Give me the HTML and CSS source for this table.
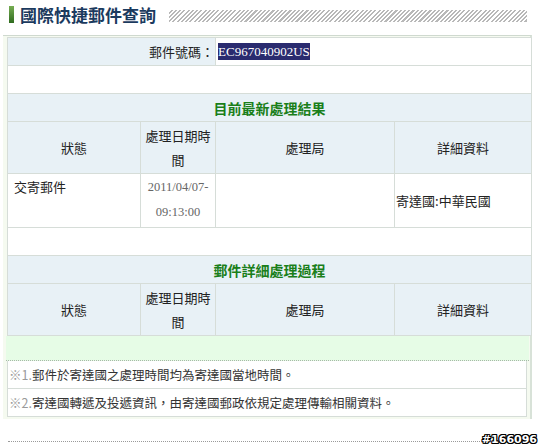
FILE: index.html
```html
<!DOCTYPE html>
<html lang="zh-Hant">
<head>
<meta charset="utf-8">
<title>國際快捷郵件查詢</title>
<link rel="stylesheet" href="styles.css">
</head>
<body>
<div class="page">
  <div class="title">
    <span class="bar"></span>
    <h1>國際快捷郵件查詢</h1>
    <span class="stripes"></span>
  </div>
  <div class="panel">
    <table class="grid">
      <colgroup><col class="c1"><col class="c2"><col class="c3"><col class="c4"></colgroup>
      <tr class="r-short blue">
        <td colspan="2" class="label">郵件號碼：</td>
        <td colspan="2" class="value"><span class="sel">EC967040902US</span></td>
      </tr>
      <tr class="r-short"><td colspan="4"></td></tr>
      <tr class="r-short blue"><td colspan="4" class="section">目前最新處理結果</td></tr>
      <tr class="r-head blue">
        <td class="center">狀態</td>
        <td class="center">處理日期時間</td>
        <td class="center">處理局</td>
        <td class="center">詳細資料</td>
      </tr>
      <tr class="r-data">
        <td class="top">交寄郵件</td>
        <td class="center date">2011/04/07-09:13:00</td>
        <td></td>
        <td class="detail">寄達國:中華民國</td>
      </tr>
      <tr class="r-short"><td colspan="4"></td></tr>
      <tr class="r-short blue"><td colspan="4" class="section">郵件詳細處理過程</td></tr>
      <tr class="r-head blue">
        <td class="center">狀態</td>
        <td class="center">處理日期時間</td>
        <td class="center">處理局</td>
        <td class="center">詳細資料</td>
      </tr>
    </table>
    <div class="green-band"></div>
    <div class="notes">
      <p class="note"><span class="mark">※1.</span>郵件於寄達國之處理時間均為寄達國當地時間。</p>
      <p class="note"><span class="mark">※2.</span>寄達國轉遞及投遞資訊，由寄達國郵政依規定處理傳輸相關資料。</p>
    </div>
  </div>
  <div class="footer">
    <span class="rule"></span>
    <span class="tag">#166096</span>
  </div>
</div>
</body>
</html>
```
FILE: styles.css
```css
html, body {
  margin: 0;
  padding: 0;
  background: #ffffff;
}
body {
  font-family: "Noto Sans CJK TC", "Noto Sans", sans-serif;
  font-size: 13px;
  color: #222;
}
.page {
  width: 541px;
  height: 448px;
  position: relative;
}
.title {
  display: flex;
  align-items: center;
  height: 30px;
  padding: 0 14px 0 9px;
  box-sizing: border-box;
}
.bar {
  width: 5px;
  height: 17px;
  background: linear-gradient(#76ad52, #2f6b1f);
  margin-right: 6px;
  margin-top: -1px;
}
.title h1 {
  margin: 0;
  font-size: 17px;
  line-height: 20px;
  font-weight: bold;
  color: #1b3a5e;
  letter-spacing: 0;
}
.stripes {
  flex: 1;
  height: 12px;
  margin-left: 13px;
  margin-top: 2px;
  background: repeating-linear-gradient(135deg, #ffffff 0 1.5px, #b8b8b8 1.5px 3px);
}
.panel {
  margin: 5px 9px 0 3px;
  border-top: 1px solid #cfd9cf;
  border-right: 2px solid #d8e2d8;
  background: #f5faf0;
  padding: 1px 1px 2px 4px;
}
.grid {
  width: 524px;
  border-collapse: collapse;
  table-layout: fixed;
  background: #ffffff;
}
.c1 { width: 133px; }
.c2 { width: 75px; }
.c3 { width: 179px; }
.c4 { width: 137px; }
.grid td {
  border: 1px solid #d6ddd8;
  padding: 0;
  vertical-align: middle;
  line-height: 24px;
}
.blue td { background: #e8f1f6; }
.r-short td { height: 27px; }
.r-head td { height: 51px; }
.r-data td { height: 52px; }
.label {
  text-align: right;
  padding-right: 1px !important;
}
.value {
  background: #ffffff !important;
  padding-left: 2px !important;
}
.sel {
  background: #2a2b6f;
  color: #ffffff;
  font-family: "Liberation Serif", serif;
  font-size: 13px;
  padding: 1px 0;
}
.section {
  text-align: center;
  font-weight: bold;
  font-size: 14px;
  color: #1a7f1a;
}
.center { text-align: center; }
.top {
  vertical-align: top !important;
  padding: 1px 6px 0 !important;
}
.date {
  font-family: "Liberation Serif", serif;
  color: #666;
  font-size: 12.5px;
  vertical-align: top !important;
  padding-top: 1px !important;
  line-height: 25px !important;
}
.detail {
  padding-left: 1px !important;
}
.green-band {
  height: 24px;
  background: #e6fce6;
  border-bottom: 1px dotted #a8b8a8;
  margin-left: -1px;
}
.notes {
  background: #ffffff;
  border-left: 1px solid #d6ddd8;
  border-right: 1px solid #d6ddd8;
  margin-right: 2px;
}
.note {
  margin: 0;
  height: 27px;
  line-height: 27px;
  border-bottom: 1px solid #d6ddd8;
  padding-left: 1px;
  color: #333;
  font-size: 12.5px;
}
.mark { color: #9a9a9a; }
.footer {
  display: flex;
  align-items: center;
  margin: 14px 4px 0 8px;
}
.rule {
  flex: 1;
  border-top: 1px dotted #9a9a9a;
  margin-top: 4px;
}
.tag {
  font-family: "DejaVu Sans", sans-serif;
  font-weight: bold;
  font-size: 11px;
  color: #ffffff;
  text-shadow: 1px 0 #000, -1px 0 #000, 0 1px #000, 0 -1px #000, 1px 1px #000, -1px -1px #000, 1px -1px #000, -1px 1px #000;
  margin-left: 2px;
}
```
